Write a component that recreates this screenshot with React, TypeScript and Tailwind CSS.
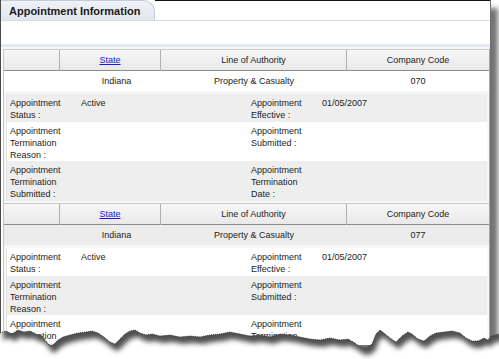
import React from "react";

const font = { fontFamily: '"Liberation Sans", Arial, sans-serif' };

const tear: [number, number][] = [
  [0, 13], [6, 11], [12, 14], [18, 10], [24, 12], [30, 11], [36, 14], [42, 16], [46, 21], [50, 26],
  [54, 24], [58, 20], [63, 17], [70, 15], [78, 13], [86, 12], [92, 11], [98, 13], [104, 17], [110, 22],
  [115, 24], [120, 19], [125, 14], [130, 11], [135, 10], [140, 13], [146, 15], [152, 14], [160, 16],
  [170, 15], [180, 17], [190, 16], [200, 17], [210, 15], [220, 14], [230, 12], [240, 14], [250, 16],
  [260, 15], [270, 17], [280, 14], [290, 15], [300, 17], [310, 19], [320, 20], [330, 18], [340, 20],
  [348, 19], [355, 23], [360, 27], [366, 28], [372, 24], [376, 14], [380, 10], [384, 13], [390, 18],
  [396, 22], [402, 16], [408, 12], [412, 14], [418, 19], [424, 21], [430, 16], [436, 13], [444, 12],
  [452, 11], [460, 13], [466, 18], [472, 21], [478, 21], [484, 18], [488, 20], [491, 16], [499, 14],
];

const TornEdge: React.FC = () => {
  const line = tear.map(([x, y]) => `${x},${y}`).join(" ");
  const below = `M${tear.map(([x, y]) => `${x},${y}`).join(" L")} L499,40 L0,40 Z`;
  const paper = `M0,-30 L499,-30 L${[...tear].reverse().map(([x, y]) => `${x},${y}`).join(" L")} Z`;
  return (
    <svg className="absolute left-0 top-[320px]" width="499" height="39" viewBox="0 0 499 39">
      <defs>
        <clipPath id="below">
          <path d={below} />
        </clipPath>
        <filter id="blur" x="-10%" y="-50%" width="120%" height="200%">
          <feGaussianBlur stdDeviation="2.4" />
        </filter>
      </defs>
      <path d={below} fill="#ffffff" />
      <g clipPath="url(#below)">
        <path d={paper} transform="translate(3,7)" fill="#333333" opacity="0.85" filter="url(#blur)" />
      </g>
      <polyline points={line} fill="none" stroke="#1e1e1e" strokeWidth="0.8" strokeDasharray="1 1" />
    </svg>
  );
};

const cols = "grid grid-cols-[56px_101px_186px_1fr]";

const Block: React.FC<{ code: string; grayData?: boolean }> = ({ code, grayData }) => {
  const rowA = grayData ? "bg-white" : "bg-[#eeeeee]";
  const rowB = grayData ? "bg-[#eeeeee]" : "bg-white";
  return (
    <div>
      <div className={`${cols} h-[22px] border-t border-b border-t-[#c9c9c9] border-b-[#8c8c8c] bg-gradient-to-b from-[#f7f7f7] to-[#e9e9e9] leading-[21px] text-center`}>
        <div className="border-r border-[#b0b0b0]" />
        <div className="border-r border-[#b0b0b0]">
          <a className="text-[#1515ee] underline">State</a>
        </div>
        <div className="border-r border-[#b0b0b0]">Line of Authority</div>
        <div>Company Code</div>
      </div>
      <div className={`${cols} h-[20px] leading-[21px] text-center ${grayData ? "bg-[#ececec]" : "bg-white"}`}>
        <div />
        <div className="pl-[12px]">Indiana</div>
        <div>Property &amp; Casualty</div>
        <div>{code}</div>
      </div>
      <div className="mx-[2px] mt-[3px] mb-[2px] border-l border-[#e3e3e3] leading-[12px]">
        <div className={`flex h-[28px] pt-[3px] pl-[3px] ${rowA}`}>
          <div className="w-[71px]">Appointment<br />Status :</div>
          <div className="w-[170px]">Active</div>
          <div className="w-[71px]">Appointment<br />Effective :</div>
          <div>01/05/2007</div>
        </div>
        <div className={`flex h-[39px] pt-[3px] pl-[3px] ${rowB}`}>
          <div className="w-[71px]">Appointment<br />Termination<br />Reason :</div>
          <div className="w-[170px]" />
          <div className="w-[71px]">Appointment<br />Submitted :</div>
          <div />
        </div>
        <div className={`flex h-[40px] pt-[3px] pl-[3px] ${rowA}`}>
          <div className="w-[71px]">Appointment<br />Termination<br />Submitted :</div>
          <div className="w-[170px]" />
          <div className="w-[71px]">Appointment<br />Termination<br />Date :</div>
          <div />
        </div>
      </div>
    </div>
  );
};

const App: React.FC = () => {
  return (
    <div className="relative w-[499px] h-[359px] overflow-hidden bg-white text-[9px] text-[#1c1c1c]" style={font}>
      <div className="w-[491px] h-[345px] overflow-hidden border-l border-r border-l-[#4a4a4a] border-r-[#707070] bg-white shadow-[7px_8px_5px_rgba(0,0,0,0.55)]">
        <div className="flex h-[21px] border-b border-[#d6dde9]">
          <div className="w-[154px] h-[20px] pl-[8px] rounded-tr-[12px] border-r border-t border-[#c3ccda] bg-gradient-to-b from-[#f0f2f7] to-[#e1e6ee] text-[11px] font-bold leading-[21px] text-[#1a1a1a]">
            Appointment Information
          </div>
          <div className="flex-1 border-t border-[#111111]" />
        </div>
        <div className="h-[23px] bg-white" />
        <div className="h-[3px] bg-[#e4e9f1]" />
        <div className="h-[2px] bg-[#f8f8f8]" />
        <div className="ml-[2px] border-l border-r border-l-[#c2c2c2] border-r-[#a8a8a8] bg-[#f7f7f7]">
          <Block code="070" />
          <Block code="077" grayData />
        </div>
      </div>
      <TornEdge />
    </div>
  );
};

export default App;
